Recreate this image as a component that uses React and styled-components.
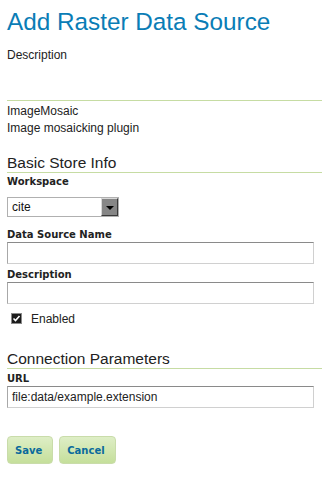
import React from "react";
import styled, { createGlobalStyle } from "styled-components";

const Global = createGlobalStyle`
  html, body { margin: 0; padding: 0; background: #ffffff; }
  body { font-family: "Liberation Sans", Arial, sans-serif; color: #222; }
`;

const Page = styled.div`
  padding: 0 0 0 7px;
  width: 315px;
`;

const Title = styled.h1`
  margin: 9px 0 0;
  font-family: "Liberation Sans", Arial, sans-serif;
  font-weight: normal;
  font-size: 24.3px;
  line-height: 25px;
  color: #0a7db6;
`;

const Text = styled.p`
  margin: ${(p) => p.$mt || 0}px 0 0;
  font-size: 12px;
  line-height: 17px;
  color: #222;
`;

const Divider = styled.div`
  margin-top: ${(p) => p.$mt || 0}px;
  height: 1px;
  background: #c6dca3;
`;

const Heading = styled.h2`
  margin: ${(p) => p.$mt || 0}px 0 0;
  font-family: "Liberation Sans", Arial, sans-serif;
  font-weight: normal;
  font-size: 15.5px;
  line-height: 19px;
  color: #222;
  border-bottom: 1px solid #c6dca3;
`;

const Label = styled.div`
  margin-top: ${(p) => p.$mt || 0}px;
  font-family: "DejaVu Sans", Verdana, sans-serif;
  font-weight: bold;
  font-size: 10px;
  line-height: 13px;
  color: #222;
`;

const Input = styled.div`
  box-sizing: border-box;
  margin-top: 1px;
  width: 307px;
  height: 22px;
  border-style: solid;
  border-width: 1px;
  border-color: #8a8a8a #d0d0d0 #d0d0d0 #a8a8a8;
  background: #fff;
  padding: 0 4px;
  font-size: 12px;
  line-height: 20px;
  color: #222;
`;

const Select = styled.div`
  box-sizing: border-box;
  margin-top: 9px;
  width: 112px;
  height: 20px;
  border: 1px solid #b0b0b0;
  background: #fff;
  display: flex;
  align-items: center;
  justify-content: space-between;
  padding: 0 0 0 4px;
  font-size: 12px;
  color: #111;
`;

const DropButton = styled.span`
  box-sizing: border-box;
  width: 17px;
  height: 18px;
  background: #868686;
  border-style: solid;
  border-width: 1px;
  border-color: #d8d8d8 #3a3a3a #3a3a3a #d8d8d8;
  display: flex;
  align-items: center;
  justify-content: center;
  &::after {
    content: "";
    display: block;
    margin-top: 1px;
    border-left: 4px solid transparent;
    border-right: 4px solid transparent;
    border-top: 4px solid #000;
  }
`;

const CheckRow = styled.label`
  margin-top: 7px;
  display: flex;
  align-items: center;
  gap: 9px;
  padding-left: 4px;
  height: 15px;
  font-size: 12px;
  color: #222;
`;

const CheckBox = styled.span`
  box-sizing: border-box;
  width: 11px;
  height: 11px;
  background: #1c1c1c;
  border: 1px solid #8a8a8a;
  display: flex;
  align-items: center;
  justify-content: center;
`;

const Buttons = styled.div`
  margin-top: 28px;
  display: flex;
  gap: 6px;
`;

const Button = styled.button`
  box-sizing: border-box;
  height: 28px;
  padding: 0 10px 0 7px;
  border: 1px solid #c9dcaa;
  border-radius: 4px;
  background: linear-gradient(#deeec6, #c5df9b);
  font-family: "DejaVu Sans", Verdana, sans-serif;
  font-weight: bold;
  font-size: 10px;
  color: #0a6a9c;
  cursor: pointer;
`;

export default function App() {
  return (
    <>
      <Global />
      <Page>
        <Title>Add Raster Data Source</Title>
        <Text $mt={13}>Description</Text>
        <Divider $mt={36} />
        <Text $mt={2}>ImageMosaic</Text>
        <Text>Image mosaicking plugin</Text>

        <Heading $mt={16}>Basic Store Info</Heading>
        <Label $mt={2}>Workspace</Label>
        <Select>
          <span>cite</span>
          <DropButton />
        </Select>
        <Label $mt={11}>Data Source Name</Label>
        <Input />
        <Label $mt={4}>Description</Label>
        <Input />
        <CheckRow>
          <CheckBox>
            <svg width="9" height="9" viewBox="0 0 9 9">
              <path d="M1.5 4.5 L3.5 6.5 L7.5 2" stroke="#fff" strokeWidth="1.6" fill="none" />
            </svg>
          </CheckBox>
          Enabled
        </CheckRow>

        <Heading $mt={23}>Connection Parameters</Heading>
        <Label $mt={3}>URL</Label>
        <Input>file:data/example.extension</Input>

        <Buttons>
          <Button>Save</Button>
          <Button>Cancel</Button>
        </Buttons>
      </Page>
    </>
  );
}
